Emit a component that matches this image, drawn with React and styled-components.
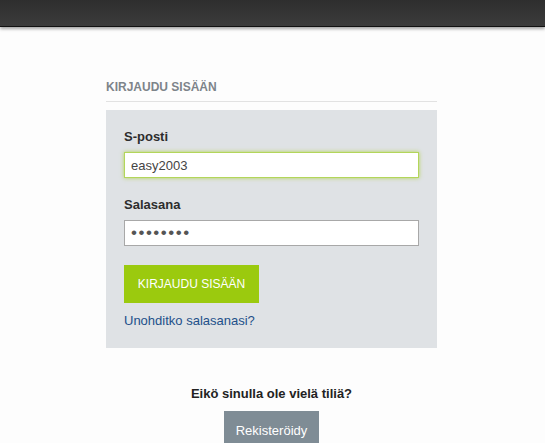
import React from "react";
import styled, { createGlobalStyle } from "styled-components";

const GlobalStyle = createGlobalStyle`
  body {
    margin: 0;
    background: #fdfdfd;
    font-family: "Liberation Sans", Arial, sans-serif;
  }
`;

// top bar
const TopBar = styled.div`
  height: 26px;
  background: linear-gradient(#2e2e2e, #3b3b3b);
  border-bottom: 1px solid #111;
  box-shadow: 0 2px 3px rgba(0, 0, 0, 0.35);
`;

const Page = styled.div`
  padding-right: 2px;
`;

const Wrapper = styled.div`
  width: 331px;
  margin: 0 auto;
  padding-top: 53px;
`;

const Title = styled.h2`
  margin: 0;
  font-size: 12px;
  line-height: 14px;
  font-weight: bold;
  color: #7d848a;
  padding-bottom: 7px;
  border-bottom: 1px solid #e2e2e2;
`;

const Panel = styled.form`
  margin-top: 8px;
  background: #dfe2e5;
  padding: 19px 18px 19px 18px;
  display: flex;
  flex-direction: column;
  align-items: flex-start;
`;

const Label = styled.label`
  font-size: 13px;
  line-height: 16px;
  font-weight: bold;
  color: #2d2d2d;
  margin-top: ${(p) => (p.first ? "0" : "19px")};
`;

const Input = styled.input`
  box-sizing: border-box;
  width: 295px;
  height: 26px;
  margin-top: 7px;
  padding: 0 6px;
  font-family: "Liberation Sans", Arial, sans-serif;
  font-size: 13px;
  color: #444;
  background: #fff;
  outline: none;
  border: 1px solid ${(p) => (p.active ? "#b3d65a" : "#a8a8a8")};
  box-shadow: ${(p) => (p.active ? "0 0 4px rgba(160, 205, 20, 0.7)" : "none")};

  &[type="password"] {
    font-size: 17px;
    letter-spacing: 1.5px;
    color: #555;
  }
`;

const Button = styled.button`
  border: none;
  height: 38px;
  padding: 0 12px;
  font-family: "Liberation Sans", Arial, sans-serif;
  font-size: ${(p) => (p.small ? "12px" : "13px")};
  color: #fff;
  background: ${(p) => p.bg};
  cursor: pointer;
`;

const SubmitButton = styled(Button)`
  margin-top: 19px;
  width: 135px;
`;

const ForgotLink = styled.a`
  margin-top: 10px;
  font-size: 13px;
  line-height: 16px;
  color: #22508a;
  text-decoration: none;
`;

const Register = styled.div`
  margin-top: 38px;
  display: flex;
  flex-direction: column;
  align-items: center;
  gap: 9px;
`;

const Question = styled.div`
  font-size: 13px;
  line-height: 16px;
  font-weight: bold;
  color: #222;
`;

const App = () => {
  return (
    <>
      <GlobalStyle />
      <TopBar />
      <Page>
        <Wrapper>
          <Title>KIRJAUDU SISÄÄN</Title>
          <Panel onSubmit={(e) => e.preventDefault()}>
            <Label first>S-posti</Label>
            <Input active type="text" defaultValue="easy2003" />
            <Label>Salasana</Label>
            <Input type="password" defaultValue="password" />
            <SubmitButton small bg="#9bca0e">KIRJAUDU SISÄÄN</SubmitButton>
            <ForgotLink href="#">Unohditko salasanasi?</ForgotLink>
          </Panel>
          <Register>
            <Question>Eikö sinulla ole vielä tiliä?</Question>
            <Button bg="#7f8c95">Rekisteröidy</Button>
          </Register>
        </Wrapper>
      </Page>
    </>
  );
};

export default App;
